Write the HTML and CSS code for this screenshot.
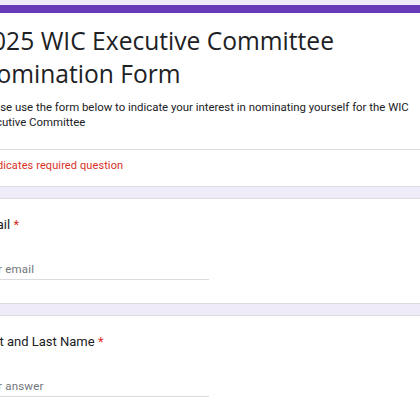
FILE: index.html
```html
<!DOCTYPE html>
<html lang="en">

<head>
    <meta charset="UTF-8" />
    <meta name="viewport" content="width=device-width, initial-scale=1" />
    <title>2025 WIC Executive Committee Nomination Form</title>
    <link rel="stylesheet" href="styles.css">
</head>

<body>

    <div class="form">

        <div class="card card-head">
            <h1 class="form-title">2025 WIC Executive Committee Nomination Form</h1>
            <p class="form-desc">Please use the form below to indicate your interest in nominating yourself for the WIC Executive Committee</p>
            <div class="required-note">* Indicates required question</div>
        </div>

        <div class="card question">
            <div class="q-label">Email <span class="star">*</span></div>
            <div class="q-input">Your email</div>
        </div>

        <div class="card question">
            <div class="q-label">First and Last Name <span class="star">*</span></div>
            <div class="q-input">Your answer</div>
        </div>

    </div>

</body>

</html>
```

FILE: styles.css
```css
html,
body {
    margin: 0;
    padding: 0;
    background-color: #f0ebf8;
    font-family: Roboto, "Liberation Sans", sans-serif;
    color: #202124;
    overflow: hidden;
}

.form {
    display: flex;
    flex-direction: column;
    gap: 11px;
    width: 512px;
    margin-left: -47px;
    padding-top: 5px;
}

.card {
    background: white;
    border: 1px solid #dadce0;
    border-radius: 8px;
    padding: 0 24px;
}

.card-head {
    border-top: 8px solid #673ab7;
    padding-top: 11px;
}

.form-title {
    margin: 0;
    font-family: "Open Sans", sans-serif;
    font-weight: 400;
    font-size: 24.6px;
    line-height: 33px;
}

.form-desc {
    margin: 10px 0 0;
    font-size: 11.4px;
    line-height: 15px;
    padding-bottom: 19px;
}

.required-note {
    margin: 0 -24px;
    padding: 6px 24px 10px 26px;
    border-top: 1px solid #dadce0;
    color: #d93025;
    font-size: 11px;
    line-height: 20px;
    letter-spacing: 0.1px;
}

.question {
    padding-top: 14px;
    padding-bottom: 23px;
}

.q-label {
    font-size: 13px;
    line-height: 24px;
}

.star {
    color: #d93025;
}

.q-input {
    width: 50%;
    margin-top: 22px;
    font-size: 11.5px;
    line-height: 20px;
    color: #70757a;
    letter-spacing: 0.2px;
    border-bottom: 1px solid #dadce0;
}
```
